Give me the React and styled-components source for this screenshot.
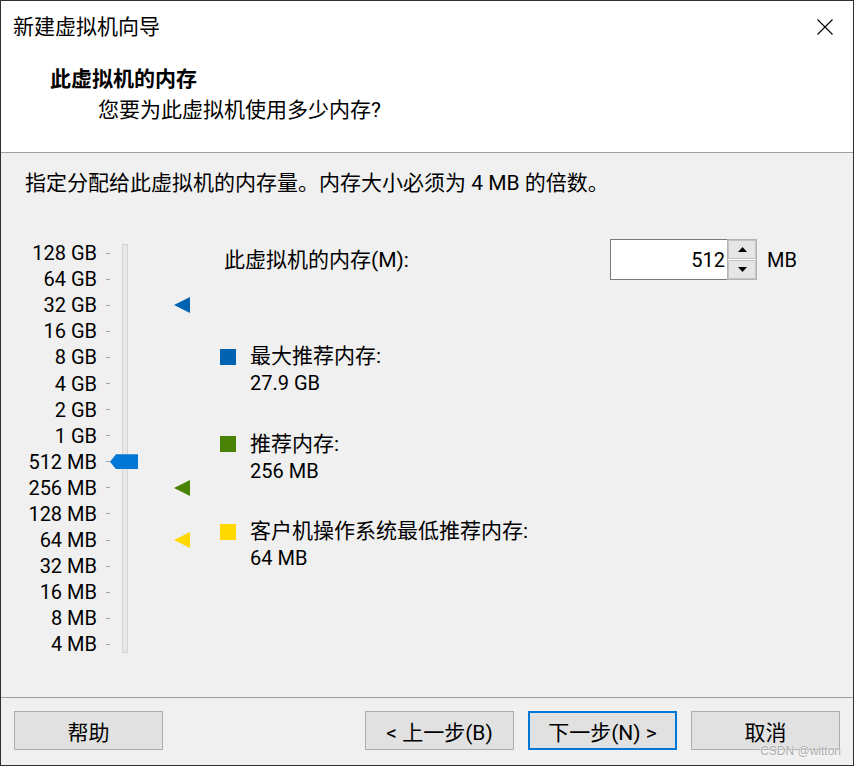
import React from 'react';
import styled, { createGlobalStyle } from 'styled-components';

const Global = createGlobalStyle`
  html, body { margin: 0; padding: 0; background: #f0f0f0; }
  body { font-family: "Noto Sans CJK SC", sans-serif; color: #000; }
  * { box-sizing: border-box; }
`;

const CJK = `"Roboto", "Noto Sans CJK SC", sans-serif`;

const Window = styled.div`
  position: relative;
  width: 854px;
  height: 766px;
  border: 1px solid #2f2f2f;
  display: flex;
  flex-direction: column;
  background: #f0f0f0;
  font-family: ${CJK};
  font-size: 21px;
`;

const Header = styled.header`
  height: 151px;
  background: #fff;
  flex: none;
  display: flex;
  flex-direction: column;
`;

const TitleBar = styled.div`
  height: 51px;
  display: flex;
  align-items: center;
  justify-content: space-between;
  padding: 0 20px 0 12px;
`;

const TitleText = styled.div`
  font-size: 21px;
  line-height: 28px;
`;

const CloseBtn = styled.div`
  width: 16px;
  height: 16px;
  display: flex;
  margin-top: 1px;
`;

const HeaderBody = styled.div`
  padding: 13px 0 0 49px;
  display: flex;
  flex-direction: column;
`;

const PageTitle = styled.div`
  font-weight: 700;
  font-size: 21px;
  line-height: 28px;
`;

const PageSubtitle = styled.div`
  font-size: 21px;
  line-height: 28px;
  margin: 3px 0 0 48px;
`;

const Divider = styled.div`
  height: 1px;
  flex: none;
  background: #a0a0a0;
`;

const Body = styled.main`
  flex: 1;
  padding: 16px 24px 0 24px;
  display: flex;
  flex-direction: column;
`;

const Instruction = styled.div`
  line-height: 28px;
  white-space: nowrap;
`;

const MainArea = styled.div`
  margin-top: 42px;
  display: flex;
  align-items: flex-start;
`;

const ScaleGrid = styled.div`
  padding-top: 1px;
  display: grid;
  grid-template-columns: 72px 9px 4px 12px 6px 46px 16px;
  grid-template-rows: repeat(16, 26.1px);
`;

const ScaleLabel = styled.div`
  grid-row: ${p => p.$row};
  grid-column: 1;
  justify-self: end;
  align-self: center;
  font-family: "Roboto", sans-serif;
  font-size: 20px;
  line-height: 26px;
  white-space: nowrap;
`;

const Tick = styled.div`
  grid-row: ${p => p.$row};
  grid-column: 3;
  align-self: center;
  height: 1px;
  background: #a8a8a8;
`;

const Track = styled.div`
  grid-row: 1 / -1;
  grid-column: 5;
  margin: 4px 0 5px;
  background: #e7e7e7;
  border: 1px solid #d4d4d4;
`;

const Thumb = styled.div`
  grid-row: ${p => p.$row};
  grid-column: 4 / 7;
  justify-self: start;
  align-self: center;
  width: 28px;
  height: 15px;
  background: #0078d7;
  clip-path: polygon(6px 0, 100% 0, 100% 100%, 6px 100%, 0 50%);
  z-index: 1;
`;

const Marker = styled.svg`
  grid-row: ${p => p.$row};
  grid-column: 7;
  align-self: center;
  width: 16px;
  height: 16px;
  display: block;
`;

const RightPanel = styled.div`
  margin-left: 30px;
  display: flex;
  flex-direction: column;
  flex: 1;
`;

const MemoryRow = styled.div`
  height: 41px;
  display: flex;
  align-items: center;
`;

const MemoryLabel = styled.div`
  width: 390px;
  padding-left: 4px;
  white-space: nowrap;
  line-height: 28px;
`;

const InputBox = styled.div`
  display: flex;
  height: 41px;
`;

const TextField = styled.div`
  width: 117px;
  height: 41px;
  background: #fff;
  border: 1px solid #7a7a7a;
  border-right: none;
  display: flex;
  align-items: center;
  justify-content: flex-end;
  padding-right: 2px;
  font-family: "Roboto", sans-serif;
  font-size: 20px;
`;

const SpinColumn = styled.div`
  width: 30px;
  height: 41px;
  background: #fff;
  border: 1px solid #b4b4b4;
  display: flex;
  flex-direction: column;
  gap: 1px;
`;

const SpinButton = styled.div`
  flex: 1;
  background: #e5e5e5;
  border: 1px solid #c4c4c4;
  display: flex;
  align-items: center;
  justify-content: center;
`;

const Unit = styled.div`
  margin-left: 10px;
  font-family: "Roboto", sans-serif;
  font-size: 20px;
`;

const LegendList = styled.div`
  padding-top: 63px;
  display: flex;
  flex-direction: column;
  gap: 33.5px;
`;

const LegendItem = styled.div`
  display: grid;
  grid-template-columns: 16px auto;
  column-gap: 14px;
`;

const Swatch = styled.div`
  width: 16px;
  height: 16px;
  margin-top: 5.5px;
  background: ${p => p.$color};
`;

const LegendText = styled.div`
  display: flex;
  flex-direction: column;
`;

const LegendLabel = styled.div`
  line-height: 27px;
  white-space: nowrap;
`;

const LegendValue = styled.div`
  line-height: 27px;
  font-family: "Roboto", sans-serif;
  font-size: 20px;
`;

const Footer = styled.footer`
  height: 67px;
  flex: none;
  padding: 13px 13px 0;
  display: flex;
  align-items: flex-start;
`;

const ButtonGroup = styled.div`
  margin-left: auto;
  display: flex;
  gap: 14px;
`;

const Button = styled.div`
  width: 149px;
  height: 39px;
  background: #e1e1e1;
  border: ${p => (p.$focused ? '2px solid #0078d7' : '1px solid #adadad')};
  display: flex;
  align-items: center;
  justify-content: center;
  font-size: 21px;
  white-space: nowrap;
`;

const Watermark = styled.div`
  position: absolute;
  right: 12px;
  bottom: 7px;
  font-family: "Liberation Sans", sans-serif;
  font-size: 12px;
  color: #a9a9a9;
  text-shadow: 0 0 2px #fff, 0 0 1px #fff;
  pointer-events: none;
`;

const scale = ['128 GB', '64 GB', '32 GB', '16 GB', '8 GB', '4 GB', '2 GB', '1 GB', '512 MB', '256 MB', '128 MB', '64 MB', '32 MB', '16 MB', '8 MB', '4 MB'];
const markers = { 2: '#0063b1', 9: '#498205', 11: '#ffd800' };
const thumbIndex = 8;

const legend = [
  { color: '#0063b1', label: '最大推荐内存:', value: '27.9 GB' },
  { color: '#498205', label: '推荐内存:', value: '256 MB' },
  { color: '#ffd800', label: '客户机操作系统最低推荐内存:', value: '64 MB' },
];

export default function App() {
  return (
    <>
      <Global />
      <Window>
        <Header>
          <TitleBar>
            <TitleText>新建虚拟机向导</TitleText>
            <CloseBtn>
              <svg width="16" height="16" viewBox="0 0 16 16">
                <path d="M0.5 0.5 L15.5 15.5 M15.5 0.5 L0.5 15.5" stroke="#000" strokeWidth="1.1" fill="none" />
              </svg>
            </CloseBtn>
          </TitleBar>
          <HeaderBody>
            <PageTitle>此虚拟机的内存</PageTitle>
            <PageSubtitle>您要为此虚拟机使用多少内存?</PageSubtitle>
          </HeaderBody>
        </Header>
        <Divider />
        <Body>
          <Instruction>指定分配给此虚拟机的内存量。内存大小必须为 4 MB 的倍数。</Instruction>
          <MainArea>
            <ScaleGrid>
              <Track />
              {scale.map((s, i) => (
                <React.Fragment key={s}>
                  <ScaleLabel $row={i + 1}>{s}</ScaleLabel>
                  <Tick $row={i + 1} />
                  {markers[i] && (
                    <Marker $row={i + 1} viewBox="0 0 16 16">
                      <polygon points="16,0 16,16 0,8" fill={markers[i]} />
                    </Marker>
                  )}
                </React.Fragment>
              ))}
              <Thumb $row={thumbIndex + 1} />
            </ScaleGrid>
            <RightPanel>
              <MemoryRow>
                <MemoryLabel>此虚拟机的内存(M):</MemoryLabel>
                <InputBox>
                  <TextField>512</TextField>
                  <SpinColumn>
                    <SpinButton>
                      <svg width="9" height="5" viewBox="0 0 9 5"><polygon points="4.5,0 9,5 0,5" fill="#000" /></svg>
                    </SpinButton>
                    <SpinButton>
                      <svg width="9" height="5" viewBox="0 0 9 5"><polygon points="0,0 9,0 4.5,5" fill="#000" /></svg>
                    </SpinButton>
                  </SpinColumn>
                </InputBox>
                <Unit>MB</Unit>
              </MemoryRow>
              <LegendList>
                {legend.map(l => (
                  <LegendItem key={l.label}>
                    <Swatch $color={l.color} />
                    <LegendText>
                      <LegendLabel>{l.label}</LegendLabel>
                      <LegendValue>{l.value}</LegendValue>
                    </LegendText>
                  </LegendItem>
                ))}
              </LegendList>
            </RightPanel>
          </MainArea>
        </Body>
        <Divider />
        <Footer>
          <Button>帮助</Button>
          <ButtonGroup>
            <Button>&lt; 上一步(B)</Button>
            <Button $focused>下一步(N) &gt;</Button>
            <Button>取消</Button>
          </ButtonGroup>
        </Footer>
        <Watermark>CSDN @witton</Watermark>
      </Window>
    </>
  );
}
